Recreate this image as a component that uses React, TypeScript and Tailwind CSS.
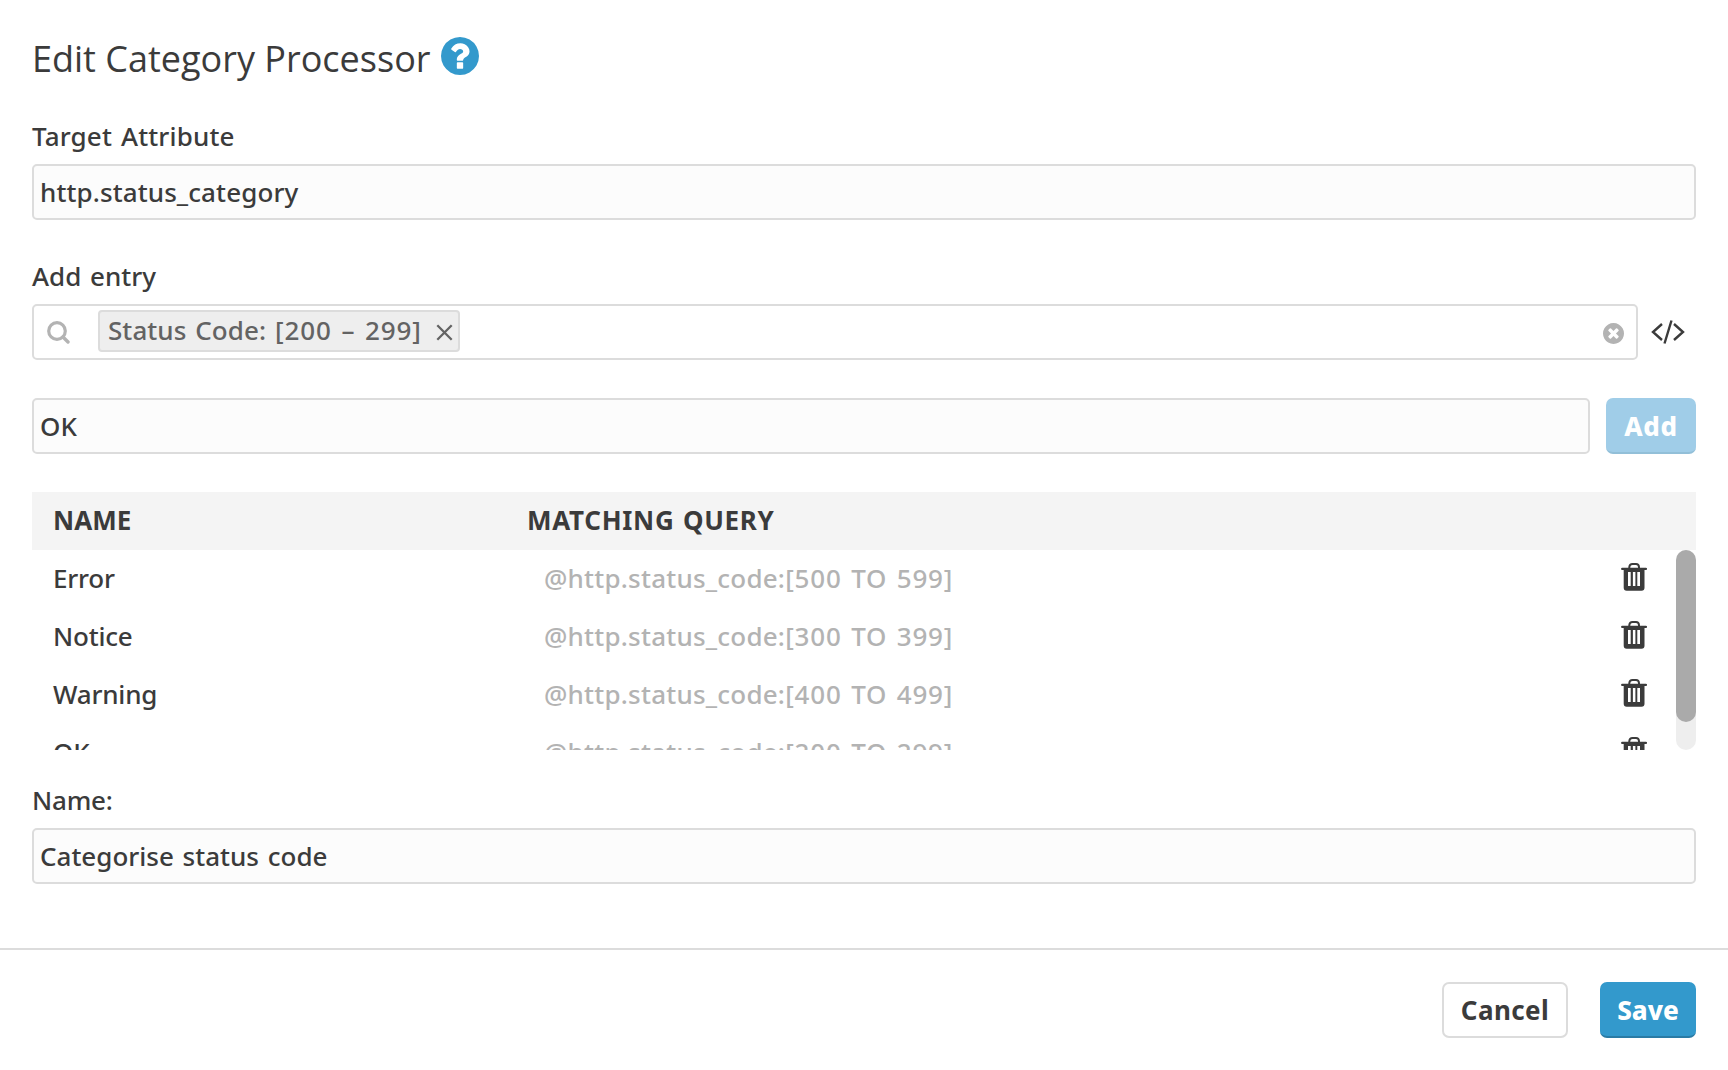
import React from 'react';

const rows = [
  { name: 'Error', field: '@http.status_code:', range: '[500 TO 599]' },
  { name: 'Notice', field: '@http.status_code:', range: '[300 TO 399]' },
  { name: 'Warning', field: '@http.status_code:', range: '[400 TO 499]' },
  { name: 'OK', field: '@http.status_code:', range: '[200 TO 299]' },
];

function HelpIcon() {
  return (
    <svg className="mt-[37px] ml-[10px] size-[38px] shrink-0 text-[#3399cc]" viewBox="128 128 1536 1536" fill="currentColor">
      <path d="M1024 1376v-192q0-14-9-23t-23-9h-192q-14 0-23 9t-9 23v192q0 14 9 23t23 9h192q14 0 23-9t9-23zm256-672q0-88-55.5-163t-138.5-116-170-41q-243 0-371 213-15 24 8 42l132 100q7 6 19 6 16 0 25-12 53-68 86-92 34-24 86-24 48 0 85.5 26t37.500 59q0 38-20 61t-68 45q-63 28-115.500 86.500t-52.500 125.500v36q0 14 9 23t23 9h192q14 0 23-9t9-23q0-19 21.500-49.500t54.500-49.500q32-18 49-28.500t46-35 44.500-48 28-60.500 12.500-81zm384 192q0 209-103 385.500t-279.500 279.500-385.500 103-385.500-103-279.500-279.500-103-385.500 103-385.500 279.500-279.500 385.500-103 385.500 103 279.500 279.500 103 385.500z" />
    </svg>
  );
}

function ClearIcon() {
  return (
    <svg className="mt-[2px] size-[21px] text-[#b3b3b3]" viewBox="128 128 1536 1536" fill="currentColor">
      <path d="M1277 1122q0-26-19-45l-181-181 181-181q19-19 19-45 0-27-19-46l-90-90q-19-19-46-19-26 0-45 19l-181 181-181-181q-19-19-45-19-27 0-46 19l-90 90q-19 19-19 46 0 26 19 45l181 181-181 181q-19 19-19 45 0 27 19 46l90 90q19 19 46 19 26 0 45-19l181-181 181 181q19 19 45 19 27 0 46-19l90-90q19-19 19-46zm387-226q0 209-103 385.500t-279.500 279.500-385.500 103-385.500-103-279.500-279.500-103-385.500 103-385.500 279.500-279.500 385.500-103 385.500 103 279.500 279.500 103 385.500z" />
    </svg>
  );
}

function TrashIcon() {
  return (
    <svg className="h-7 w-[26px]" viewBox="0 0 26 28" fill="none" stroke="#3b3b3b">
      <path d="M8.300 5V4Q8.600 1 11.500 1h3.500Q17.800 1 18 4V5" strokeWidth="2" />
      <path d="M1.200 5.900h23.800" strokeWidth="2.300" strokeLinecap="round" />
      <path fillRule="evenodd" d="M2.700 6h20.800v18.700q0 3-3 3H5.700q-3 0-3-3zM7 9v14h2.700V9zM11.900 9v14h2.500V9zM16.300 9v14h2.700V9z" fill="#3b3b3b" stroke="none" />
    </svg>
  );
}

export default function App() {
  return (
    <div className="h-[1070px] w-[1728px] overflow-hidden bg-white font-['Noto_Sans',sans-serif] text-[26px] leading-[36px] font-medium text-[#3b3b3b]">
      <div className="px-8">
        <header className="flex h-[118px] items-start">
          <h1 className="mt-[34px] font-['Open_Sans',sans-serif] text-[36px] leading-[49px] font-normal whitespace-nowrap">Edit Category Processor</h1>
          <HelpIcon />
        </header>

        <label className="block h-[46px] tracking-[0.15px] [word-spacing:2px]">Target Attribute</label>
        <div className="flex h-14 items-center rounded-[5px] border-2 border-[#dcdcdc] bg-[#fcfcfc] px-[6px] tracking-[0.1px]">http.status_category</div>

        <label className="mt-[38px] block h-[46px] [word-spacing:2px]">Add entry</label>
        <div className="flex items-center">
          <div className="flex h-14 w-[1606px] items-center rounded-[5px] border-2 border-[#dcdcdc] bg-white pr-[12px] pl-[13px]">
            <svg className="size-[23px]" viewBox="0 0 23 23" fill="none" stroke="#b3b3b3">
              <circle cx="10" cy="10" r="8.300" strokeWidth="3.200" />
              <path d="M16 16l5 5" strokeWidth="3.400" strokeLinecap="round" />
            </svg>
            <div className="mb-[3px] ml-[28px] flex h-[42px] w-[362px] items-center rounded-[4px] border-2 border-[#dcdcdc] bg-[#eeeeee] pl-2 text-[#636363]">
              <span className="mb-[2px] tracking-[0.07px] whitespace-nowrap [word-spacing:2px]">
                Status Code: <span className="tracking-[0.9px]">[200 – 299]</span>
              </span>
              <svg className="mt-[3px] mr-[5px] ml-auto size-[17px] shrink-0" viewBox="0 0 17 17" stroke="#636363" strokeWidth="2.300">
                <path d="M1.300 1.300l14.400 14.400M15.700 1.300L1.300 15.700" />
              </svg>
            </div>
            <div className="ml-auto"><ClearIcon /></div>
          </div>
          <svg className="ml-[13px] h-6 w-[34px]" viewBox="0 0 34 24" fill="none" stroke="#3b3b3b" strokeWidth="2.400">
            <path d="M11 4L2 12l9 8M20.500 0.500L13.500 23.500M23 4l9 8-9 8" />
          </svg>
        </div>

        <div className="mt-[38px] flex gap-4">
          <div className="flex h-14 flex-1 items-center rounded-[5px] border-2 border-[#dcdcdc] bg-[#fcfcfc] px-[6px]">OK</div>
          <button className="h-14 w-[90px] rounded-[7px] border-b-2 border-[#92bfd8] bg-[#a0cde8] pt-[2px] font-extrabold tracking-[0.6px] text-white">Add</button>
        </div>

        <section className="mt-[38px]">
          <div className="flex h-[58px] items-center bg-[#f4f4f4] pb-[2px] pl-[21px] font-bold">
            <span className="w-[474px]">NAME</span>
            <span className="tracking-[0.7px] [word-spacing:1px]">MATCHING QUERY</span>
          </div>
          <div className="flex h-[200px] overflow-hidden">
            <div className="flex-1">
              {rows.map((row) => (
                <div key={row.name} className="flex h-[58px] items-center pb-[2px] pl-[21px]">
                  <span className="w-[491px] tracking-[-0.2px]">{row.name}</span>
                  <span className="flex-1 tracking-[0.22px] text-[#b3b3b3] [word-spacing:2px]">
                    {row.field}<span className="tracking-[0.8px]">{row.range}</span>
                  </span>
                  <span className="mr-[29px] mb-[2px]"><TrashIcon /></span>
                </div>
              ))}
            </div>
            <div className="h-[200px] w-5 rounded-full bg-[#eeeeee]">
              <div className="h-[172px] rounded-full bg-[#aaaaaa]" />
            </div>
          </div>
        </section>

        <label className="mt-[32px] block h-[46px] tracking-[-0.2px]">Name:</label>
        <div className="flex h-14 items-center rounded-[5px] border-2 border-[#dcdcdc] bg-[#fcfcfc] px-[6px] [word-spacing:2px]">Categorise status code</div>
      </div>

      <footer className="mt-16 flex justify-end gap-8 border-t-2 border-[#dcdcdc] px-8 pt-8">
        <button className="h-14 w-[126px] rounded-[7px] border-2 border-[#dcdcdc] bg-white font-bold tracking-[0.4px]">Cancel</button>
        <button className="h-14 w-24 rounded-[7px] border-b-2 border-[#2a7ba5] bg-[#3399cc] pt-[2px] font-extrabold text-white">Save</button>
      </footer>
    </div>
  );
}
